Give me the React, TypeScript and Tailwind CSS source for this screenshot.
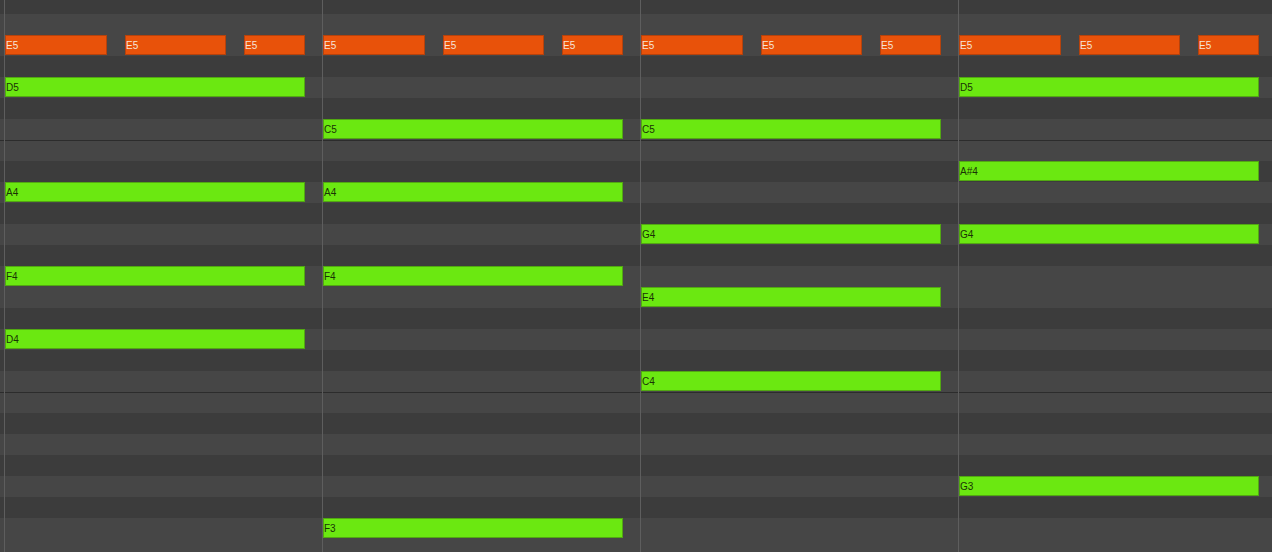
const PITCHES = [
  "F#5", "F5", "E5", "D#5", "D5", "C#5", "C5",
  "B4", "A#4", "A4", "G#4", "G4", "F#4", "F4", "E4", "D#4", "D4", "C#4", "C4",
  "B3", "A#3", "A3", "G#3", "G3", "F#3", "F3", "E3",
];

type Note = { pitch: string; x: number; w: number; accent?: boolean };

const BARS = [4, 322, 640, 958];

const notes: Note[] = [
  ...BARS.flatMap((b) => [
    { pitch: "E5", x: b + 1, w: 102, accent: true },
    { pitch: "E5", x: b + 121, w: 101, accent: true },
    { pitch: "E5", x: b + 240, w: 61, accent: true },
  ]),
  { pitch: "D5", x: 5, w: 300 },
  { pitch: "A4", x: 5, w: 300 },
  { pitch: "F4", x: 5, w: 300 },
  { pitch: "D4", x: 5, w: 300 },
  { pitch: "C5", x: 323, w: 300 },
  { pitch: "A4", x: 323, w: 300 },
  { pitch: "F4", x: 323, w: 300 },
  { pitch: "F3", x: 323, w: 300 },
  { pitch: "C5", x: 641, w: 300 },
  { pitch: "G4", x: 641, w: 300 },
  { pitch: "E4", x: 641, w: 300 },
  { pitch: "C4", x: 641, w: 300 },
  { pitch: "D5", x: 959, w: 300 },
  { pitch: "A#4", x: 959, w: 300 },
  { pitch: "G4", x: 959, w: 300 },
  { pitch: "G3", x: 959, w: 300 },
];

function Row({ pitch }: { pitch: string }) {
  const black = pitch.includes("#");
  const octaveTop = pitch.startsWith("B");
  return (
    <div
      className={`relative h-[21px] ${black ? "bg-[#3c3c3c]" : "bg-[#464646]"} ${
        octaveTop ? "border-t border-[#2c2c2c]" : ""
      }`}
    >
      {notes
        .filter((n) => n.pitch === pitch)
        .map((n, i) => (
          <div
            key={i}
            style={{ left: n.x, width: n.w }}
            className={`absolute top-0 z-10 flex h-[20px] items-center border pt-[1px] text-[10px] leading-none ${
              n.accent
                ? "border-[#b5420c] bg-[#e8520a] text-[#f6e4d8]"
                : "border-[#52a812] bg-[#6be811] text-[#1a3306]"
            }`}
          >
            {n.pitch}
          </div>
        ))}
    </div>
  );
}

export default function App() {
  return (
    <div className="relative h-[552px] w-[1272px] overflow-hidden bg-[#464646] font-['Liberation_Sans',Arial,sans-serif]">
      <div className="-mt-[7px] flex flex-col">
        {PITCHES.map((p) => (
          <Row key={p} pitch={p} />
        ))}
      </div>
      {BARS.map((x) => (
        <div
          key={x}
          style={{ left: x }}
          className="absolute inset-y-0 w-px bg-[#5e5e5e]"
        />
      ))}
    </div>
  );
}
